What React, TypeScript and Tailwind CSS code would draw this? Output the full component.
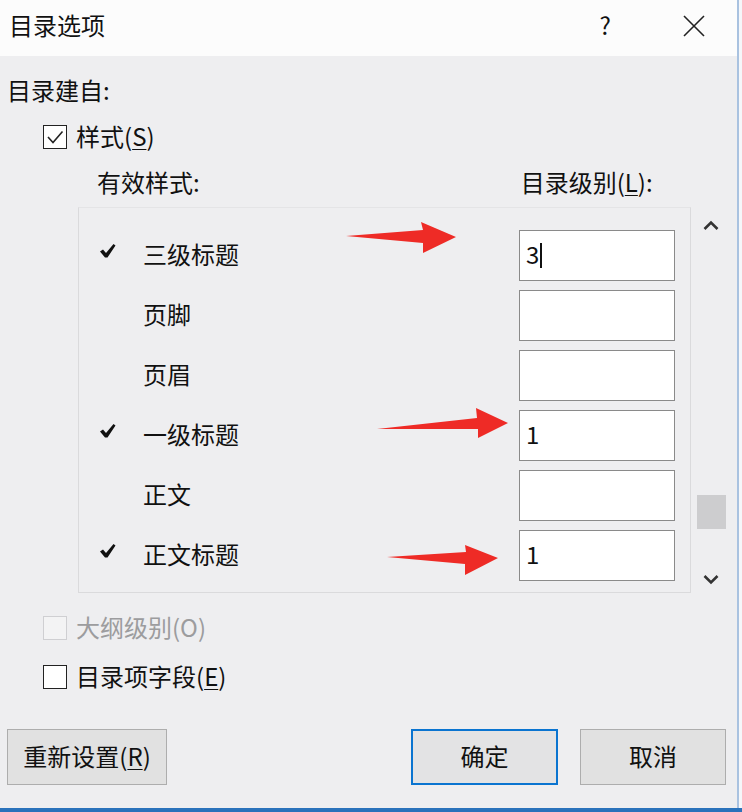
const FONT = "font-['Noto_Sans_CJK_SC','Liberation_Sans',sans-serif]";

function Tick() {
  return (
    <svg width="16" height="14" viewBox="0 0 16 14" className="shrink-0">
      <polygon points="0,7.5 3,5.5 6,9 13.5,0 15.5,1.5 7.5,13.5 5,13.5" fill="#111" />
    </svg>
  );
}

function Box({ checked = false, disabled = false }: { checked?: boolean; disabled?: boolean }) {
  return (
    <div
      className={
        disabled
          ? "w-[24px] h-[24px] border border-[#cfcfd2] bg-[#f3f3f4] shrink-0"
          : "w-[24px] h-[24px] border-[1.5px] border-[#222] bg-white shrink-0 flex items-center justify-center"
      }
    >
      {checked && (
        <svg width="20" height="20" viewBox="0 0 20 20">
          <polyline points="3,10 8,15.5 17.5,4.5" fill="none" stroke="#222" strokeWidth="1.6" />
        </svg>
      )}
    </div>
  );
}

function Arrow({ points }: { points: string }) {
  return <polygon points={points} fill="#ee2b26" />;
}

const rows = [
  { on: true, name: "三级标题", val: "3", cursor: true },
  { on: false, name: "页脚", val: "" },
  { on: false, name: "页眉", val: "" },
  { on: true, name: "一级标题", val: "1" },
  { on: false, name: "正文", val: "" },
  { on: true, name: "正文标题", val: "1" },
];

export default function App() {
  return (
    <div className={`relative w-[742px] h-[812px] overflow-hidden flex flex-col bg-[#eeeef0] text-[#111] ${FONT}`}>
      <div className="flex flex-1">
        <div className="w-[737px] flex flex-col">
          {/* title bar */}
          <div className="h-[56px] bg-[#fcfcfc] flex items-center pl-[9px] shrink-0">
            <span className="text-[24px] leading-none -mt-[7px]">目录选项</span>
            <span className="ml-auto text-[24px] leading-none mr-[72px] -mt-[6px]">?</span>
            <svg width="22" height="22" viewBox="0 0 22 22" className="mr-[32px] -mt-[4px]">
              <path d="M1 1 L21 21 M21 1 L1 21" stroke="#222" strokeWidth="1.6" />
            </svg>
          </div>

          {/* body */}
          <div className="pl-[7px] flex flex-col">
            <div className="mt-[22px] h-[24px] text-[24px] leading-[24px]">目录建自:</div>

            <div className="mt-[23px] h-[24px] ml-[36px] flex items-center gap-[9px]">
              <Box checked />
              <span className="text-[24px] leading-[24px] -mt-[2px]">
                样式(<span className="underline underline-offset-[3px] decoration-1">S</span>)
              </span>
            </div>

            <div className="mt-[21px] h-[24px] flex text-[24px] leading-[24px]">
              <span className="ml-[90px]">有效样式:</span>
              <span className="ml-[321px]">
                目录级别(<span className="underline underline-offset-[3px] decoration-1">L</span>):
              </span>
            </div>

            {/* list + scrollbar */}
            <div className="mt-[13px] flex">
              <div className="ml-[71px] w-[613px] h-[386px] border border-[#dadadc] border-t-[#e4e4e6] pt-[22px] pr-[15px] flex flex-col gap-[9px]">
                {rows.map((r) => (
                  <div key={r.name} className="h-[51px] flex items-center">
                    <div className="w-[64px] pl-[21px] flex items-center -mt-[10px]">{r.on && <Tick />}</div>
                    <span className="text-[24px] leading-[24px] -mt-[3px]">{r.name}</span>
                    <div className="ml-auto w-[156px] h-[51px] bg-white border border-[#8a8a8a] flex items-center pl-[6px]">
                      <span className="text-[24px] leading-[24px] -mt-[3px]">{r.val}</span>
                      {r.cursor && <span className="ml-[1px] w-[1.5px] h-[25px] bg-[#111]" />}
                    </div>
                  </div>
                ))}
              </div>
              <div className="w-[45px] flex flex-col items-start pl-[12px]">
                <svg width="16" height="10" viewBox="0 0 16 10" className="mt-[13px]">
                  <polyline points="1.5,9 8,2.5 14.5,9" fill="none" stroke="#333" strokeWidth="2.6" />
                </svg>
                <div className="mt-[265px] -ml-[6px] w-[29px] h-[34px] bg-[#cdcdcf]" />
                <svg width="16" height="10" viewBox="0 0 16 10" className="mt-[46px]">
                  <polyline points="1.5,1 8,7.5 14.5,1" fill="none" stroke="#333" strokeWidth="2.6" />
                </svg>
              </div>
            </div>

            <div className="mt-[23px] h-[24px] ml-[36px] flex items-center gap-[9px]">
              <Box disabled />
              <span className="text-[24px] leading-[24px] text-[#9c9c9e] -mt-[2px]">大纲级别(O)</span>
            </div>

            <div className="mt-[25px] h-[24px] ml-[36px] flex items-center gap-[9px]">
              <Box />
              <span className="text-[24px] leading-[24px] -mt-[2px]">
                目录项字段(<span className="underline underline-offset-[3px] decoration-1">E</span>)
              </span>
            </div>

            <div className="mt-[40px] flex h-[56px]">
              <button className="w-[160px] h-[56px] bg-[#e1e1e1] border border-[#adadad] text-[24px] leading-none flex items-center justify-center pb-[3px]">
                <span>
                  重新设置(<span className="underline underline-offset-[3px] decoration-1">R</span>)
                </span>
              </button>
              <button className="ml-[244px] w-[147px] h-[56px] bg-[#e3e3e4] border-2 border-[#0a74d0] text-[24px] leading-none flex items-center justify-center pb-[3px]">
                确定
              </button>
              <button className="ml-[22px] w-[146px] h-[56px] bg-[#e1e1e1] border border-[#adadad] text-[24px] leading-none flex items-center justify-center pb-[3px]">
                取消
              </button>
            </div>
          </div>
        </div>
        <div className="w-[2px] bg-[#a9c2e0]" />
        <div className="flex-1 bg-[#f5f7fa]" />
      </div>
      <div className="h-[4px] bg-[#2a72bb] shrink-0" />

      {/* red annotation arrows */}
      <svg className="absolute inset-0 pointer-events-none" width="742" height="812" viewBox="0 0 742 812">
        <Arrow points="346,236 423,230 421,222 456,237 423,253 423,243" />
        <Arrow points="377,429 477,418 476,408 508,423 478,438 478,429" />
        <Arrow points="387,557 466,552 465,545 498,558 465,575 465,564" />
      </svg>
    </div>
  );
}
